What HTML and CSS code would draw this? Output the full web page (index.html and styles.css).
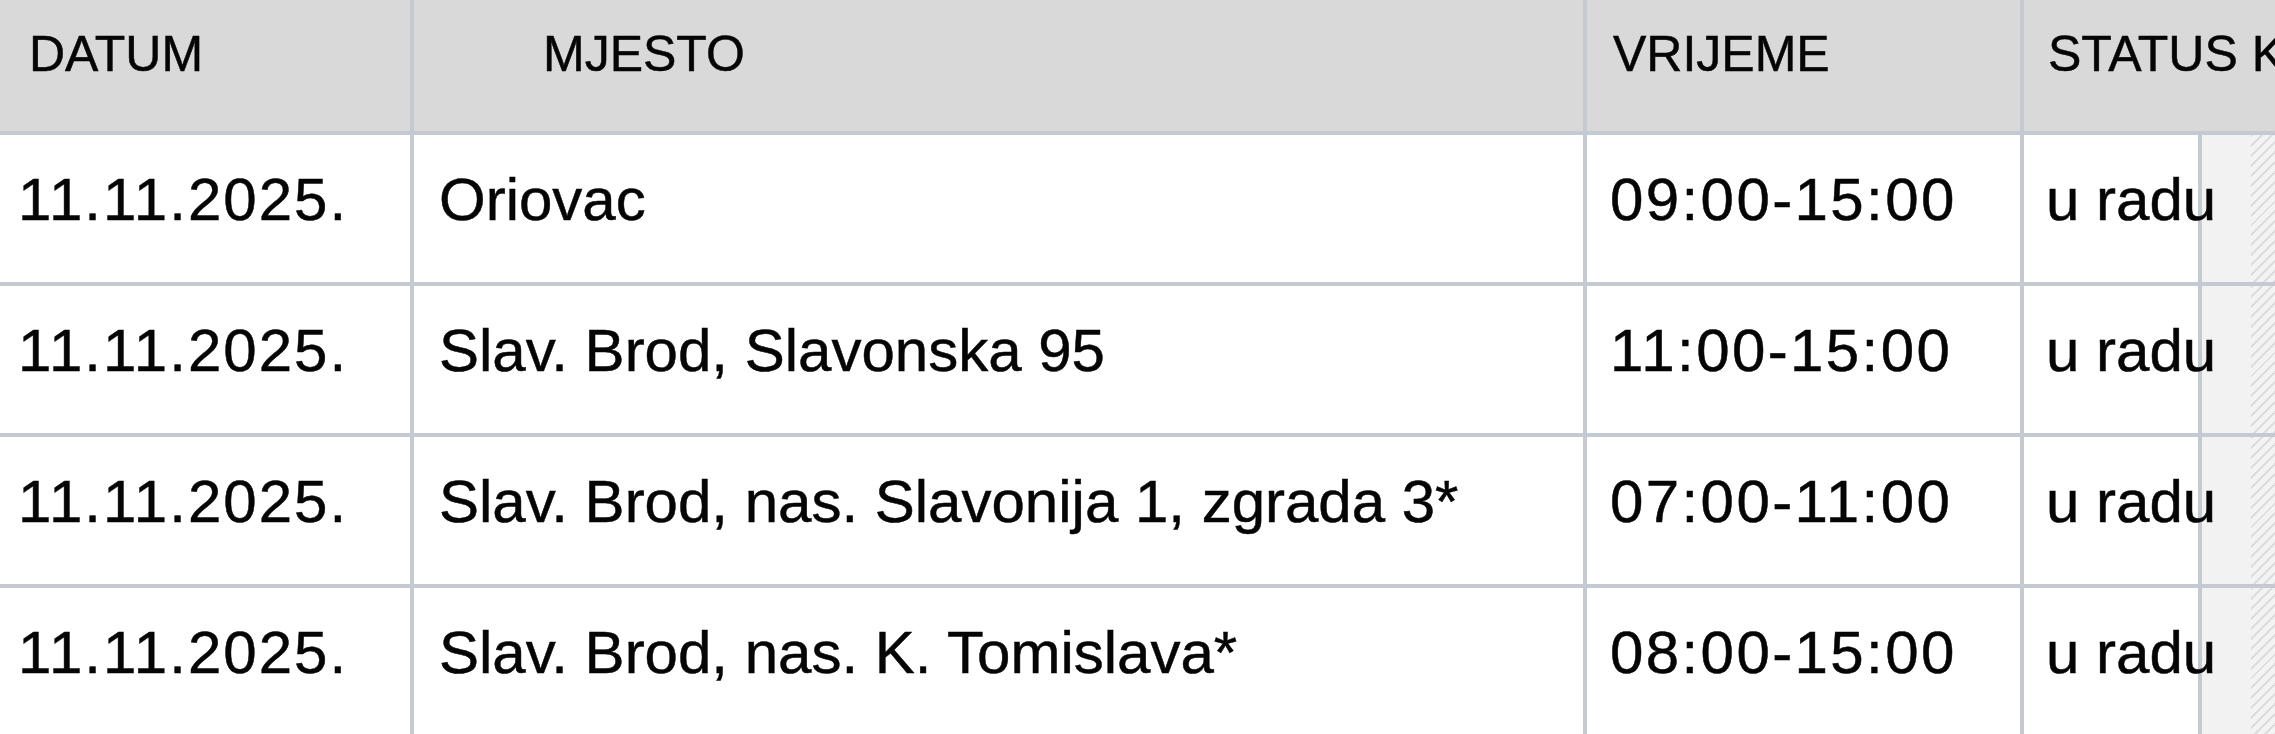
FILE: index.html
```html
<!DOCTYPE html>
<html lang="hr">
<head>
<meta charset="utf-8">
<title>Raspored</title>
<link rel="stylesheet" href="styles.css">
</head>
<body>
<div class="table">
  <div class="hcell c-date">DATUM</div>
  <div class="hcell c-place">MJESTO</div>
  <div class="hcell c-time">VRIJEME</div>
  <div class="hcell c-status">STATUS KONTROLE</div>

  <div class="cell c-date">11.11.2025.</div>
  <div class="cell c-place">Oriovac</div>
  <div class="cell c-time">09:00-15:00</div>
  <div class="cell c-status">u radu</div>
  <div class="extra"><div class="shade"></div><div class="hatch"></div></div>

  <div class="cell c-date">11.11.2025.</div>
  <div class="cell c-place">Slav. Brod, Slavonska 95</div>
  <div class="cell c-time">11:00-15:00</div>
  <div class="cell c-status">u radu</div>
  <div class="extra"><div class="shade"></div><div class="hatch"></div></div>

  <div class="cell c-date">11.11.2025.</div>
  <div class="cell c-place">Slav. Brod, nas. Slavonija 1, zgrada 3*</div>
  <div class="cell c-time">07:00-11:00</div>
  <div class="cell c-status">u radu</div>
  <div class="extra"><div class="shade"></div><div class="hatch"></div></div>

  <div class="cell c-date">11.11.2025.</div>
  <div class="cell c-place">Slav. Brod, nas. K. Tomislava*</div>
  <div class="cell c-time">08:00-15:00</div>
  <div class="cell c-status">u radu</div>
  <div class="extra"><div class="shade"></div><div class="hatch"></div></div>
</div>
</body>
</html>
```
FILE: styles.css
```css
html, body {
  margin: 0;
  padding: 0;
  background: #ffffff;
  overflow: hidden;
}

.table {
  display: grid;
  grid-template-columns: 410px 1169px 433px 174px 1fr;
  grid-template-rows: 131px repeat(4, 147px);
  gap: 4px;
  background: #c5cad2;
  width: 2275px;
  font-family: "Liberation Sans", Arial, sans-serif;
  color: #050505;
  -webkit-text-stroke: 0.5px #050505;
}

.hcell {
  background: #d9d9d9;
  font-size: 50px;
  line-height: 50px;
  padding-top: 29px;
  white-space: nowrap;
  overflow: hidden;
  box-sizing: border-box;
}

.hcell.c-date { padding-left: 29px; }
.hcell.c-place { padding-left: 129px; }
.hcell.c-time { padding-left: 26px; }
.hcell.c-status {
  grid-column: 4 / -1;
  padding-left: 24px;
}

.cell {
  background: #ffffff;
  font-size: 60px;
  line-height: 60px;
  padding-top: 35px;
  white-space: nowrap;
  box-sizing: border-box;
}

.cell.c-date {
  padding-left: 18px;
  letter-spacing: 2px;
}
.cell.c-place { padding-left: 25px; }
.cell.c-time {
  padding-left: 23px;
  letter-spacing: 2.4px;
}
.cell.c-status {
  padding-left: 22px;
  position: relative;
  z-index: 1;
}

.extra {
  display: flex;
  background: #ffffff;
}

.shade {
  width: 49px;
  background: #f2f2f2;
}

.hatch {
  flex: 1;
  background: repeating-linear-gradient(135deg, #dddddd 0 2px, #f3f3f3 2px 7px);
}
```
